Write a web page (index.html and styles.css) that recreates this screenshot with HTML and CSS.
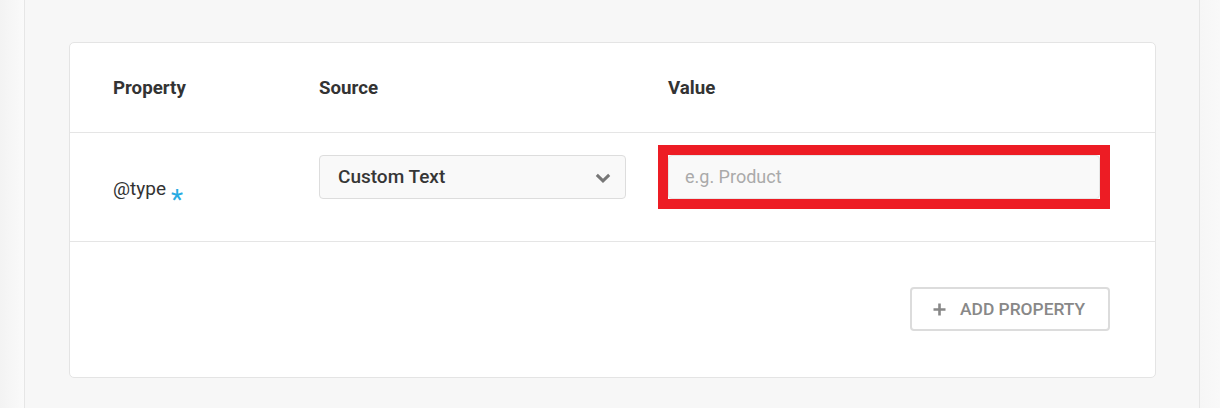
FILE: index.html
```html
<!DOCTYPE html>
<html lang="en">
<head>
<meta charset="utf-8">
<title>Properties</title>
<link rel="stylesheet" href="styles.css">
</head>
<body>
<div class="shell">
  <div class="gutter gutter-left"></div>
  <main class="main">
    <section class="card">
      <div class="grid head">
        <div class="th">Property</div>
        <div class="th">Source</div>
        <div class="th">Value</div>
      </div>
      <div class="grid row">
        <div class="prop">@type<span class="req">*</span></div>
        <div class="src">
          <div class="select">
            <span class="select-text">Custom Text</span>
            <svg class="chev" width="16" height="10" viewBox="0 0 16 10"><path d="M1.8 1.8 L8 7.8 L14.2 1.8" fill="none" stroke="#777" stroke-width="3"/></svg>
          </div>
        </div>
        <div class="val">
          <div class="highlight">
            <div class="input"><span class="placeholder">e.g. Product</span></div>
          </div>
        </div>
      </div>
      <div class="foot">
        <button class="add-btn" type="button">
          <svg class="plus" width="13" height="13" viewBox="0 0 13 13"><path d="M6.5 0.5 V12.5 M0.5 6.5 H12.5" fill="none" stroke="#888" stroke-width="2.6"/></svg>
          <span>ADD PROPERTY</span>
        </button>
      </div>
    </section>
  </main>
  <div class="gutter gutter-right"></div>
</div>
</body>
</html>
```
FILE: styles.css
```css
* { box-sizing: border-box; }
html, body { margin: 0; padding: 0; }
body {
  font-family: Roboto, "Liberation Sans", Arial, sans-serif;
  color: #333;
  background: #f7f7f7;
}
.shell {
  display: flex;
  width: 1220px;
  height: 408px;
  overflow: hidden;
}
.gutter-left {
  width: 24px;
  flex: none;
  background: linear-gradient(to right, #f3f3f3, #fafafa);
}
.gutter-right {
  flex: 1;
  background: linear-gradient(to right, #f6f6f6, #f9f9f9);
}
.main {
  width: 1176px;
  flex: none;
  background: #f7f7f7;
  border-left: 1px solid #e6e6e6;
  border-right: 1px solid #e6e6e6;
  padding: 42px 43px 0 44px;
}
.card {
  background: #fff;
  border: 1px solid #e4e4e4;
  border-radius: 5px;
  height: 336px;
}
.grid {
  display: grid;
  grid-template-columns: 206px 349px 432px;
  padding: 0 43px;
}
.head {
  height: 90px;
  align-items: center;
  border-bottom: 1px solid #e5e5e5;
}
.th {
  font-size: 18.7px;
  font-weight: 700;
  color: #333;
}
.row {
  height: 109px;
  border-bottom: 1px solid #e5e5e5;
  padding-top: 22px;
  align-items: start;
}
.prop {
  font-size: 19px;
  padding-top: 24px;
  line-height: 20px;
  color: #333;
}
.req {
  color: #29abe2;
  font-size: 28px;
  margin-left: 5px;
  vertical-align: -14px;
  line-height: 1;
}
.select {
  width: 307px;
  height: 44px;
  background: #f9f9f9;
  border: 1px solid #dddddd;
  border-radius: 4px;
  display: flex;
  align-items: center;
  justify-content: space-between;
  padding: 0 14px 2px 18px;
}
.select-text {
  font-size: 19px;
  font-weight: 500;
  color: #363636;
}
.chev { display: block; margin-top: 3px; }
.highlight {
  border: 10px solid #ed1c24;
  margin: -10px;
  width: 452px;
}
.input {
  height: 44px;
  background: #f9f9f9;
  border: 1px solid #e6e6e6;
  border-radius: 4px;
  display: flex;
  align-items: center;
  padding: 0 16px 2px;
}
.placeholder {
  font-size: 18px;
  color: #aaaaaa;
}
.foot {
  display: flex;
  justify-content: flex-end;
  padding: 45px 45px 0 44px;
}
.add-btn {
  width: 200px;
  height: 44px;
  background: #fff;
  border: 2px solid #dcdcdc;
  border-radius: 4px;
  display: flex;
  align-items: center;
  justify-content: flex-start;
  gap: 14px;
  font-family: Roboto, "Liberation Sans", Arial, sans-serif;
  font-size: 17.4px;
  font-weight: 500;
  color: #888;
  padding: 0 0 0 21px;
  cursor: pointer;
}
.plus { display: block; }
```
